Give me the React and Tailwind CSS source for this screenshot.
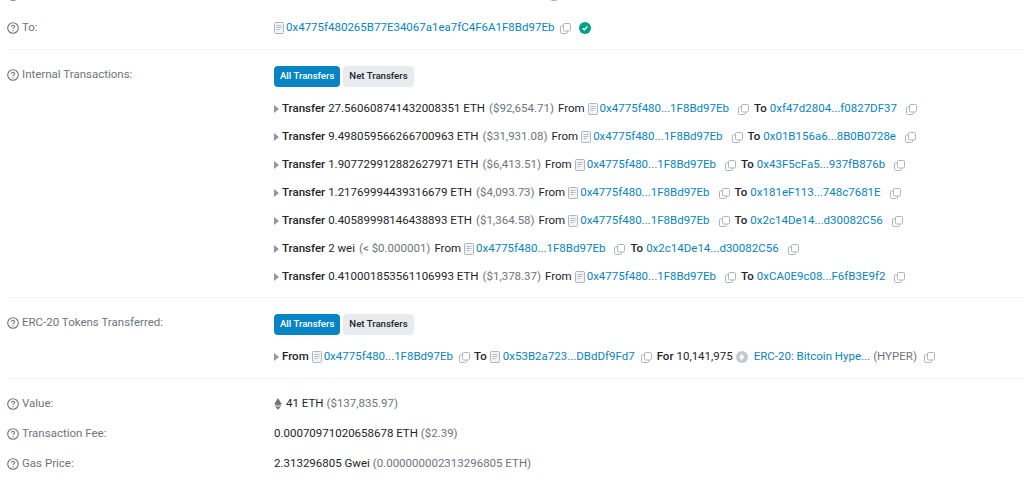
const Help = () => (
  <svg viewBox="0 0 12 12" className="w-3 h-3 shrink-0 text-[#6c757d]" fill="none" stroke="currentColor">
    <circle cx="6" cy="6" r="5.3" strokeWidth="1.1" />
    <path d="M4.5 4.7a1.500 1.400 0 1 1 2.300 1.200c-.5.3-.8.6-.8 1.100" strokeWidth="1.1" />
    <circle cx="6" cy="8.800" r=".7" fill="currentColor" stroke="none" />
  </svg>
);

const FileIcon = () => (
  <svg viewBox="0 0 10 12" className="w-[10px] h-3 shrink-0 text-[#adb5bd]" fill="#f3f4f6" stroke="currentColor">
    <rect x=".5" y=".5" width="9" height="11" rx="1" strokeWidth="1" />
    <path d="M2.500 3.500h5M2.500 5.500h5M2.500 7.500h3" strokeWidth=".9" />
  </svg>
);

const Copy = ({ className = "" }) => (
  <svg viewBox="0 0 11 11" className={`w-[11px] h-[11px] shrink-0 text-[#adb5bd] ${className}`} fill="none" stroke="currentColor">
    <rect x="3.5" y=".5" width="7" height="7.500" rx="1.200" strokeWidth="1" />
    <path d="M3.500 2.800H1.700c-.7 0-1.200.5-1.200 1.200v5.300c0 .7.5 1.200 1.200 1.200h4.600c.7 0 1.200-.5 1.200-1.200V8" strokeWidth="1" />
  </svg>
);

const Caret = () => (
  <svg viewBox="0 0 5 8" className="w-[5px] h-2 shrink-0 mr-[3px] text-[#8c98a4]" fill="currentColor">
    <path d="M0 0l5 4-5 4z" />
  </svg>
);

const Check = () => (
  <svg viewBox="0 0 12 12" className="w-3 h-3 shrink-0">
    <circle cx="6" cy="6" r="6" fill="#00a186" />
    <path d="M3.600 6.200l1.700 1.600 3.100-3.300" fill="none" stroke="#fff" strokeWidth="1.300" />
  </svg>
);

const EthIcon = () => (
  <svg viewBox="0 0 8 12" className="w-2 h-3 shrink-0 text-[#6c757d]" fill="currentColor">
    <path d="M4 0l3.700 6L4 8.100.3 6z" />
    <path d="M4 9l3.700-2.200L4 12 .3 6.800z" />
  </svg>
);

const Addr = ({ children }) => <span className="text-[#0784c3]">{children}</span>;

const Label = ({ children, className = "" }) => (
  <div className={`w-[267px] shrink-0 flex items-center gap-[3px] text-[#6c757d] ${className}`}>
    <Help />
    <span>{children}</span>
  </div>
);

const Tabs = () => (
  <div className="flex gap-[3px] text-[9.6px] font-medium">
    <span className="h-[21px] px-[6px] flex items-center rounded-[4px] bg-[#0784c3] text-white">All Transfers</span>
    <span className="h-[21px] px-[6px] flex items-center rounded-[4px] bg-[#e9ecef] text-[#212529]">Net Transfers</span>
  </div>
);

const transfers = [
  { amount: "27.560608741432008351 ETH", usd: "($92,654.71)", to: "0xf47d2804...f0827DF37" },
  { amount: "9.498059566266700963 ETH", usd: "($31,931.08)", to: "0x01B156a6...8B0B0728e" },
  { amount: "1.907729912882627971 ETH", usd: "($6,413.51)", to: "0x43F5cFa5...937fB876b" },
  { amount: "1.21769994439316679 ETH", usd: "($4,093.73)", to: "0x181eF113...748c7681E" },
  { amount: "0.40589998146438893 ETH", usd: "($1,364.58)", to: "0x2c14De14...d30082C56" },
  { amount: "2 wei", usd: "(< $0.000001)", to: "0x2c14De14...d30082C56" },
  { amount: "0.410001853561106993 ETH", usd: "($1,378.37)", to: "0xCA0E9c08...F6fB3E9f2" },
];

const TransferRow = ({ t }) => (
  <div className="h-7 flex items-center whitespace-nowrap">
    <Caret />
    <span className="font-medium text-[#212529]">Transfer</span>
    <span className="ml-[3px] text-[#212529]">{t.amount}</span>
    <span className="ml-[4px] text-[#6c757d]">{t.usd}</span>
    <span className="ml-[4px] text-[#212529]">From</span>
    <span className="ml-[3px]"><FileIcon /></span>
    <span className="ml-[2px]"><Addr>0x4775f480...1F8Bd97Eb</Addr></span>
    <Copy className="ml-[9px]" />
    <span className="ml-[5px] font-medium text-[#212529]">To</span>
    <span className="ml-[3px]"><Addr>{t.to}</Addr></span>
    <Copy className="ml-[9px]" />
  </div>
);

export default function App() {
  return (
    <div className="h-[483px] overflow-hidden bg-white pl-[7px] text-[11.5px] text-[#212529] font-['Roboto',sans-serif]">
      {/* bottom of the row cut off above */}
      <div className="h-0 relative">
        <div className="absolute -top-[11px] left-0 w-3 h-3"><Help /></div>
        <div className="absolute -top-[10px] left-[543px]"><Copy /></div>
      </div>

      <div className="h-[50px] pt-[20px] flex border-b border-[#f5f6f7]">
        <Label className="h-4">To:</Label>
        <div className="h-4 flex items-center">
          <FileIcon />
          <span className="ml-[2px]"><Addr>0x4775f480265B77E34067a1ea7fC4F6A1F8Bd97Eb</Addr></span>
          <Copy className="ml-[6px]" />
          <span className="ml-[8px]"><Check /></span>
        </div>
      </div>

      <div className="h-[248px] pt-[16px] flex border-b border-[#f5f6f7]">
        <Label className="h-[18px]">Internal Transactions:</Label>
        <div>
          <Tabs />
          <div className="mt-[8px]">
            {transfers.map((t) => <TransferRow key={t.amount} t={t} />)}
          </div>
        </div>
      </div>

      <div className="h-[81px] pt-[16px] flex border-b border-[#f5f6f7]">
        <Label className="h-[18px]">ERC-20 Tokens Transferred:</Label>
        <div>
          <Tabs />
          <div className="mt-[8px] h-7 flex items-center whitespace-nowrap">
            <Caret />
            <span className="font-medium">From</span>
            <span className="ml-[3px]"><FileIcon /></span>
            <span className="ml-[2px]"><Addr>0x4775f480...1F8Bd97Eb</Addr></span>
            <Copy className="ml-[6px]" />
            <span className="ml-[4px] font-medium">To</span>
            <span className="ml-[3px]"><FileIcon /></span>
            <span className="ml-[3px]"><Addr>0x53B2a723...DBdDf9Fd7</Addr></span>
            <Copy className="ml-[6px]" />
            <span className="ml-[5px] font-medium">For</span>
            <span className="ml-[3px]">10,141,975</span>
            <span className="ml-[3px] w-3 h-3 rounded-full bg-[#c3c9d0] flex items-center justify-center">
              <span className="w-[5px] h-[7px] bg-white [clip-path:polygon(50%_0,100%_50%,50%_100%,0_50%)]" />
            </span>
            <span className="ml-[6px]"><Addr>ERC-20: Bitcoin Hype...</Addr></span>
            <span className="ml-[3px] text-[#6c757d]">(HYPER)</span>
            <Copy className="ml-[7px]" />
          </div>
        </div>
      </div>

      <div className="h-[30px] mt-[10px] flex items-center">
        <Label>Value:</Label>
        <div className="flex items-center">
          <EthIcon />
          <span className="ml-[4px]">41 ETH</span>
          <span className="ml-[3px] text-[#6c757d]">($137,835.97)</span>
        </div>
      </div>
      <div className="h-[30px] flex items-center">
        <Label>Transaction Fee:</Label>
        <div>0.00070971020658678 ETH <span className="text-[#6c757d]">($2.39)</span></div>
      </div>
      <div className="h-[30px] flex items-center">
        <Label>Gas Price:</Label>
        <div>2.313296805 Gwei <span className="text-[#6c757d]">(0.000000002313296805 ETH)</span></div>
      </div>
    </div>
  );
}
